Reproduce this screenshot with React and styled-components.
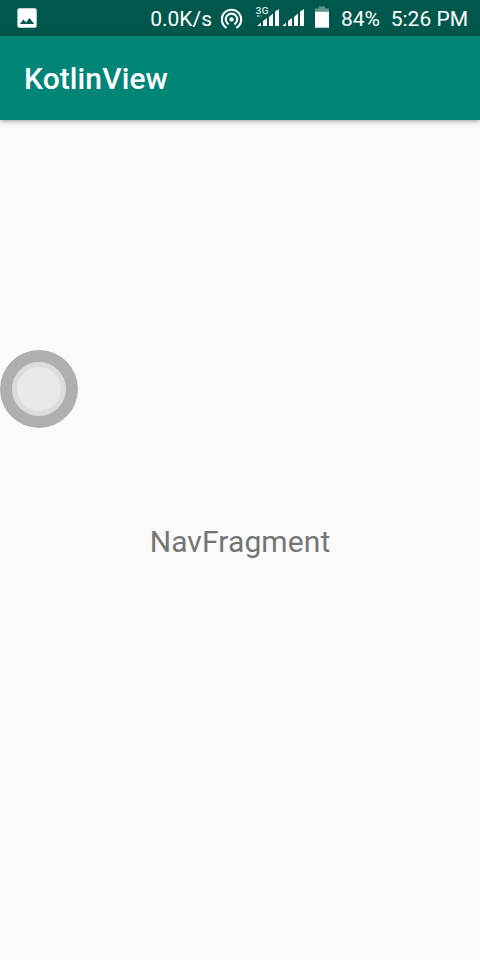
import React from "react";
import styled, { createGlobalStyle } from "styled-components";

const GlobalStyle = createGlobalStyle`
  * { box-sizing: border-box; }
  body { margin: 0; background: #fafafa; }
`;

const Screen = styled.div`
  position: relative;
  display: flex;
  flex-direction: column;
  width: 480px;
  height: 960px;
  overflow: hidden;
  background: #fafafa;
  font-family: Roboto, sans-serif;
`;

const StatusBar = styled.header`
  display: flex;
  align-items: center;
  height: 36px;
  padding: 0 12px 0 17px;
  background: #00574b;
  color: #fff;
`;

const StatusIcon = styled.svg`
  display: block;
  flex: none;
  margin-left: ${(p) => p.$gap || 0}px;
`;

const StatusGroup = styled.div`
  display: flex;
  align-items: center;
  height: 36px;
  margin-left: auto;
`;

const StatusText = styled.span`
  display: flex;
  justify-content: flex-end;
  width: ${(p) => p.$width}px;
  margin-left: ${(p) => p.$gap || 0}px;
  padding-top: 2px;
  font-size: 21px;
  line-height: 34px;
  white-space: nowrap;
`;

const NetworkLabel = styled.text`
  font: 500 9.5px Roboto, sans-serif;
  fill: #d5e4e1;
`;

const AppBar = styled.div`
  z-index: 1;
  display: flex;
  align-items: center;
  flex: none;
  height: 84px;
  padding: 1px 24px 0;
  background: #008577;
  box-shadow: 0 1px 5px rgba(0, 0, 0, 0.4);
`;

const Title = styled.h1`
  margin: 0;
  color: #fff;
  font-size: 30px;
  font-weight: 500;
  letter-spacing: 0.1px;
  line-height: 36px;
`;

const Content = styled.main`
  flex: 1;
  display: flex;
  align-items: center;
  justify-content: center;
  padding-top: 4px;
`;

const Label = styled.p`
  margin: 0;
  color: #757575;
  font-size: 30px;
  letter-spacing: 0.1px;
  line-height: 36px;
`;

const FloatingButton = styled.button`
  position: absolute;
  z-index: 2;
  top: 350px;
  left: 0;
  display: grid;
  place-items: center;
  width: 78px;
  height: 78px;
  padding: 0;
  border: 0;
  border-radius: 50%;
  background: #afafaf;
`;

const ButtonCore = styled.span`
  width: 54px;
  height: 54px;
  border: 5px solid #dcdcdc;
  border-radius: 50%;
  background: #e9e9e9;
`;

function PictureIcon() {
  return (
    <StatusIcon width="20" height="36" viewBox="0 0 20 36">
      <rect x="0.4" y="8.3" width="19.3" height="19.4" rx="2" fill="#fff" />
      <path d="M2.8 24 L6.5 19.5 L9 22.4 L12.5 18 L17.2 24 Z" fill="#00574b" />
    </StatusIcon>
  );
}

function HotspotIcon() {
  return (
    <StatusIcon width="22" height="36" viewBox="0.5 0.2 22 36" $gap={9} fill="none" stroke="#fff" strokeWidth="2.1">
      <circle cx="11" cy="19.6" r="2.2" fill="#fff" stroke="none" />
      <path d="M8.15 24.5 A5.7 5.7 0 1 1 13.85 24.5" />
      <path d="M6.15 28 A9.7 9.7 0 1 1 15.85 28" />
    </StatusIcon>
  );
}

function SignalIcon() {
  return (
    <StatusIcon width="50" height="36" viewBox="0 0 50 36" $gap={12} fill="#fff">
      <NetworkLabel x="0.5" y="14" textLength="13" lengthAdjust="spacingAndGlyphs">3G</NetworkLabel>
      <path d="M2 15.5h2.5v1h-2.5z" />
      <path d="M5.5 15.5h1.5v1h-1.5z" fillOpacity="0.5" />
      {[2, 27].map((x) => (
        <path
          key={x}
          transform={`translate(${x} 0)`}
          d="M0.3 26 L4 22.7 V26 Z M6 26 V21 L10 18 V26 Z M12 26 V17 L16 13.5 V26 Z M18 26 V11.5 L22 9 V26 Z"
        />
      ))}
    </StatusIcon>
  );
}

function BatteryIcon() {
  return (
    <StatusIcon width="14" height="36" viewBox="0 0 14 36" $gap={10}>
      <path d="M4 6.4h6v2h4v3.3h-14v-3.3h4z" fill="#fff" fillOpacity="0.38" />
      <path d="M0 11.7h14v16h-14z" fill="#fff" />
    </StatusIcon>
  );
}

export default function App() {
  return (
    <>
      <GlobalStyle />
      <Screen>
        <StatusBar>
          <PictureIcon />
          <StatusGroup>
            <StatusText $width={63}>0.0K/s</StatusText>
            <HotspotIcon />
            <SignalIcon />
            <BatteryIcon />
            <StatusText $width={40} $gap={11}>84%</StatusText>
            <StatusText $width={78} $gap={10}>5:26 PM</StatusText>
          </StatusGroup>
        </StatusBar>
        <AppBar>
          <Title>KotlinView</Title>
        </AppBar>
        <Content>
          <Label>NavFragment</Label>
        </Content>
        <FloatingButton aria-label="Quick actions">
          <ButtonCore />
        </FloatingButton>
      </Screen>
    </>
  );
}
